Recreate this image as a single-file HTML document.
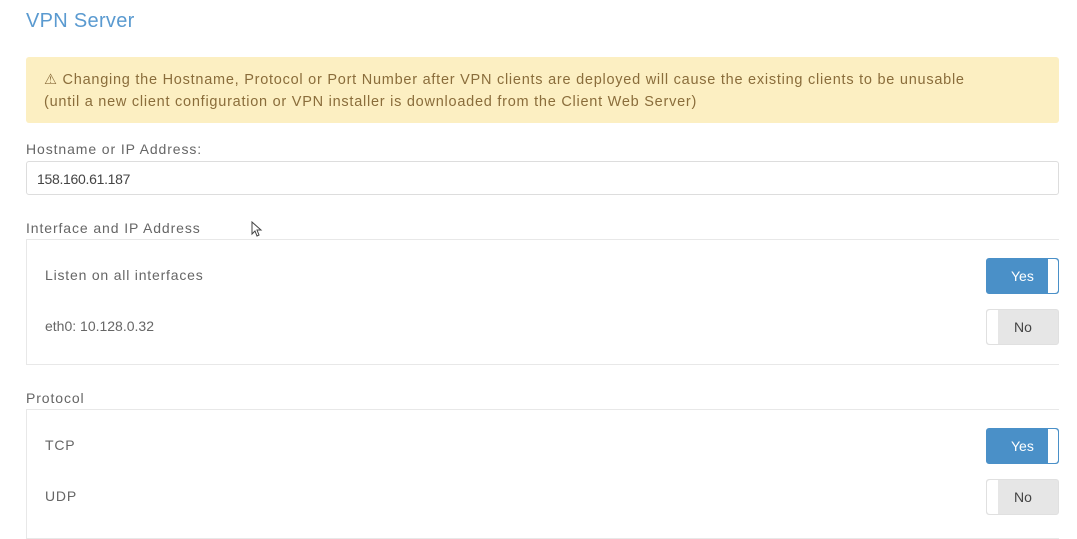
<!DOCTYPE html>
<html><head><style>
body{margin:0;background:#fff;font-family:"Liberation Sans",sans-serif;width:1077px;height:528px;overflow:hidden;position:relative;color:#555}
.a{position:absolute}
h1{position:absolute;left:26px;top:10px;margin:0;font-weight:normal;font-size:20px;color:#5a9ad0;letter-spacing:0.3px}
.alert{left:26px;top:57px;width:1033px;height:66px;background:#fcefc2;border-radius:3px;color:#8a6d3b;font-size:14.5px;letter-spacing:0.75px;line-height:22px;box-sizing:border-box;padding:12px 0 0 18px;white-space:nowrap}
.lbl{font-size:14px;color:#666;letter-spacing:0.9px}
.input{left:26px;top:161px;width:1033px;height:34px;border:1px solid #ddd;border-radius:3px;box-sizing:border-box;font-size:14px;color:#444;padding:9px 10px;letter-spacing:-0.3px}
.panel{left:26px;width:1033px;border:1px solid #e8e8e8;border-right:none;box-sizing:border-box}
.row{font-size:14px;color:#666;letter-spacing:0.8px}
.tog{width:73px;height:36px;border-radius:3px;box-sizing:border-box;font-size:14px}
.yes{background:#4a90c8;color:#fff;border:1px solid #4a90c8}
.yes span{position:absolute;left:24px;top:9px}
.yes i{position:absolute;right:0;top:0;width:10px;height:34px;background:#fff;border-radius:0 3px 3px 0}
.no{background:#e6e6e6;color:#444;border:1px solid #e0e0e0}
.no span{position:absolute;left:27px;top:9px}
.no i{position:absolute;left:0;top:0;width:11px;height:34px;background:#fff;border-radius:3px 0 0 3px}
</style></head><body>
<h1>VPN Server</h1>
<div class="a alert">⚠ Changing the Hostname, Protocol or Port Number after VPN clients are deployed will cause the existing clients to be unusable<br>(until a new client configuration or VPN installer is downloaded from the Client Web Server)</div>
<div class="a lbl" style="left:26px;top:141px">Hostname or IP Address:</div>
<div class="a input">158.160.61.187</div>
<div class="a lbl" style="left:26px;top:220px">Interface and IP Address</div>
<div class="a panel" style="top:239px;height:126px"></div>
<div class="a row" style="left:45px;top:267px">Listen on all interfaces</div>
<div class="a tog yes" style="left:986px;top:258px"><span>Yes</span><i></i></div>
<div class="a row" style="left:45px;top:318px;letter-spacing:0">eth0: 10.128.0.32</div>
<div class="a tog no" style="left:986px;top:309px"><i></i><span>No</span></div>
<div class="a lbl" style="left:26px;top:390px">Protocol</div>
<div class="a panel" style="top:409px;height:130px"></div>
<div class="a row" style="left:45px;top:437px">TCP</div>
<div class="a tog yes" style="left:986px;top:428px"><span>Yes</span><i></i></div>
<div class="a row" style="left:45px;top:488px">UDP</div>
<div class="a tog no" style="left:986px;top:479px"><i></i><span>No</span></div>
<svg class="a" style="left:251px;top:221px" width="12" height="16" viewBox="0 0 12 16"><path d="M1 1 L1 13 L4 10 L6 15 L8 14 L6 9 L10 9 Z" fill="#fff" stroke="#444" stroke-width="1"/></svg>
</body></html>
